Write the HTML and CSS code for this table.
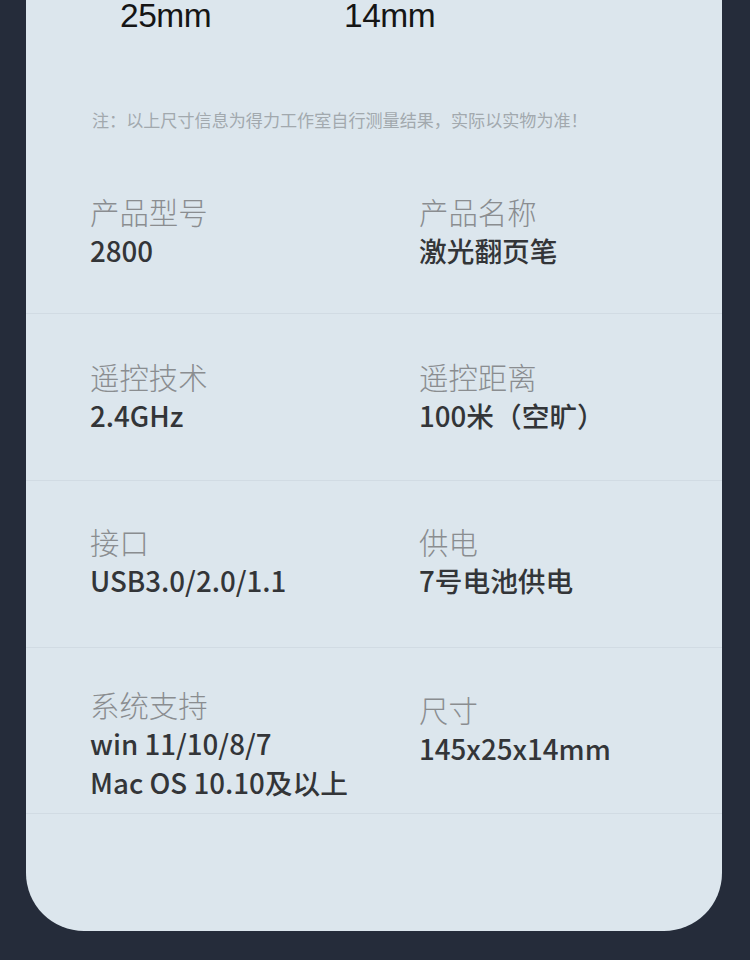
FILE: index.html
```html
<!DOCTYPE html>
<html lang="zh-CN">
<head>
    <meta charset="UTF-8">
    <meta name="viewport" content="width=device-width, initial-scale=1.0">
    <title>产品参数</title>
    <link rel="stylesheet" href="styles.css">
</head>

<body>

    <div class="card">
        <div class="dims">
            <span class="dim dim-width">25mm</span>
            <span class="dim dim-height">14mm</span>
        </div>

        <p class="note">注：以上尺寸信息为得力工作室自行测量结果，实际以实物为准！</p>

        <div class="specs">
            <div class="spec-row">
                <div class="spec">
                    <div class="spec-label">产品型号</div>
                    <div class="spec-value">2800</div>
                </div>
                <div class="spec">
                    <div class="spec-label">产品名称</div>
                    <div class="spec-value">激光翻页笔</div>
                </div>
            </div>

            <div class="spec-row">
                <div class="spec">
                    <div class="spec-label">遥控技术</div>
                    <div class="spec-value">2.4GHz</div>
                </div>
                <div class="spec">
                    <div class="spec-label">遥控距离</div>
                    <div class="spec-value">100米（空旷）</div>
                </div>
            </div>

            <div class="spec-row">
                <div class="spec">
                    <div class="spec-label">接口</div>
                    <div class="spec-value">USB3.0/2.0/1.1</div>
                </div>
                <div class="spec">
                    <div class="spec-label">供电</div>
                    <div class="spec-value">7号电池供电</div>
                </div>
            </div>

            <div class="spec-row">
                <div class="spec">
                    <div class="spec-label">系统支持</div>
                    <div class="spec-value">win 11/10/8/7<br>Mac OS 10.10及以上</div>
                </div>
                <div class="spec spec-lower">
                    <div class="spec-label">尺寸</div>
                    <div class="spec-value">145x25x14mm</div>
                </div>
            </div>
        </div>
    </div>

</body>
</html>
```

FILE: styles.css
```css
body {
    margin: 0;
    background: #252c3a;
    font-family: "Noto Sans CJK SC", "Noto Sans", sans-serif;
}

.card {
    margin: 0 28px 0 26px;
    height: 931px;
    background: #dce6ed;
    border-radius: 0 0 58px 58px;
    overflow: hidden;
}

.dims {
    display: flex;
    height: 32px;
    padding-left: 94px;
}

.dim {
    font-family: "Liberation Sans", sans-serif;
    font-size: 33.5px;
    line-height: 32px;
    letter-spacing: -0.5px;
    color: #151515;
}

.dim-height {
    margin-left: 133px;
}

.note {
    margin: 76px 0 0 66px;
    font-size: 17.1px;
    line-height: 24px;
    color: #a2a9ae;
}

.specs {
    margin-top: 15px;
}

.spec-row {
    display: flex;
    padding: 44px 0 43px 64px;
    border-bottom: 1px solid #d1dbe3;
}

/* text sits a little higher in the lower rows */
.spec-row:nth-child(2) {
    padding-top: 42px;
    padding-bottom: 45px;
}

.spec-row:nth-child(3) {
    padding-top: 40px;
    padding-bottom: 47px;
}

.spec-row:nth-child(4) {
    padding-top: 36px;
    padding-bottom: 11px;
}

.spec {
    flex: 1;
}

.spec:first-child {
    flex: 0 0 329px;
}

.spec-lower {
    padding-top: 5px;
}

.spec-label {
    font-size: 29.4px;
    font-weight: 300;
    line-height: 40px;
    color: #8a8d90;
}

.spec-value {
    font-size: 27.7px;
    font-weight: 500;
    line-height: 39px;
    color: #333538;
}
```
